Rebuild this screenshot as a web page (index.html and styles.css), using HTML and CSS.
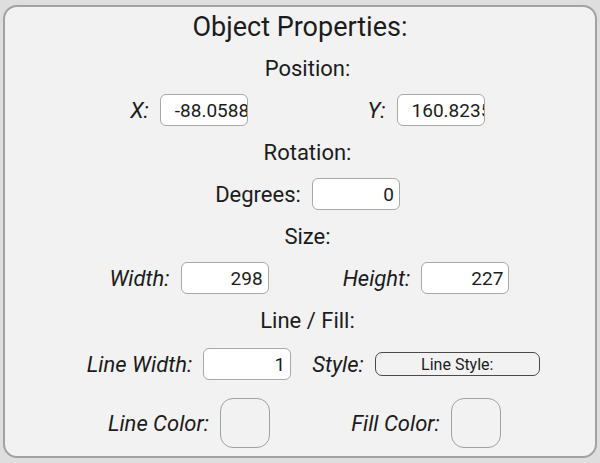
FILE: index.html
```html
<!DOCTYPE html>
<html>
<head>
<meta charset="utf-8">
<link rel="stylesheet" href="styles.css">
</head>
<body>
<div class="panel">
  <div class="title">Object Properties:</div>
  <div class="content">
    <div class="heading">Position:</div>
    <div class="pair-row">
      <div class="field"><span class="label italic">X:</span><div class="box clip">-88.05882352941177</div></div>
      <div class="field"><span class="label italic">Y:</span><div class="box clip">160.82352941176472</div></div>
    </div>
    <div class="heading">Rotation:</div>
    <div class="single-row">
      <div class="field"><span class="label">Degrees:</span><div class="box">0</div></div>
    </div>
    <div class="heading">Size:</div>
    <div class="pair-row">
      <div class="field"><span class="label italic">Width:</span><div class="box">298</div></div>
      <div class="field"><span class="label italic">Height:</span><div class="box">227</div></div>
    </div>
    <div class="heading">Line / Fill:</div>
    <div class="pair-row tall">
      <div class="field"><span class="label italic">Line Width:</span><div class="box">1</div></div>
      <div class="field"><span class="label italic">Style:</span><div class="select">Line Style:</div></div>
    </div>
    <div class="pair-row colors">
      <div class="field"><span class="label italic">Line Color:</span><div class="swatch"></div></div>
      <div class="field"><span class="label italic">Fill Color:</span><div class="swatch"></div></div>
    </div>
  </div>
</div>
</body>
</html>
```

FILE: styles.css
```css
html, body {
  margin: 0;
  padding: 0;
}
body {
  background: #dedede;
  font-family: Roboto, "Noto Sans", sans-serif;
  color: #1c1c1c;
  width: 600px;
  height: 463px;
  overflow: hidden;
}
.panel {
  margin: 5px 0 0 3px;
  width: 590px;
  height: 449px;
  border: 2px solid #a2a2a2;
  border-radius: 14px;
  background: #f2f2f2;
  box-sizing: content-box;
}
.title {
  height: 40px;
  display: flex;
  align-items: center;
  justify-content: center;
  font-size: 27px;
}
.content {
  padding-left: 15px;
}
.heading {
  height: 42px;
  display: flex;
  align-items: center;
  justify-content: center;
  font-size: 22px;
}
.pair-row {
  height: 42px;
  display: grid;
  grid-template-columns: 237px 237px;
  justify-content: center;
  justify-items: center;
  align-items: center;
}
.pair-row.tall {
  height: 46px;
}
.pair-row.colors {
  margin-top: 11px;
  height: 50px;
}
.single-row {
  height: 42px;
  display: flex;
  align-items: center;
  justify-content: center;
}
.field {
  display: flex;
  align-items: center;
  gap: 11px;
}
.label {
  font-size: 22px;
  white-space: nowrap;
}
.italic {
  font-style: italic;
}
.box {
  width: 88px;
  height: 32px;
  box-sizing: border-box;
  border: 1.5px solid #a8a8a8;
  border-radius: 6px;
  background: #ffffff;
  font-size: 19px;
  display: flex;
  align-items: center;
  justify-content: flex-end;
  padding-right: 5px;
  overflow: hidden;
  white-space: nowrap;
}
.box.clip {
  justify-content: flex-start;
  padding-right: 0;
  padding-left: 14px;
}
.select {
  width: 165px;
  height: 24px;
  box-sizing: border-box;
  border: 1.5px solid #4a4a4a;
  border-radius: 7px;
  display: flex;
  align-items: center;
  justify-content: center;
  font-size: 16px;
}
.swatch {
  width: 50px;
  height: 50px;
  box-sizing: border-box;
  border: 1.5px solid #a0a0a0;
  border-radius: 13px;
}
```
